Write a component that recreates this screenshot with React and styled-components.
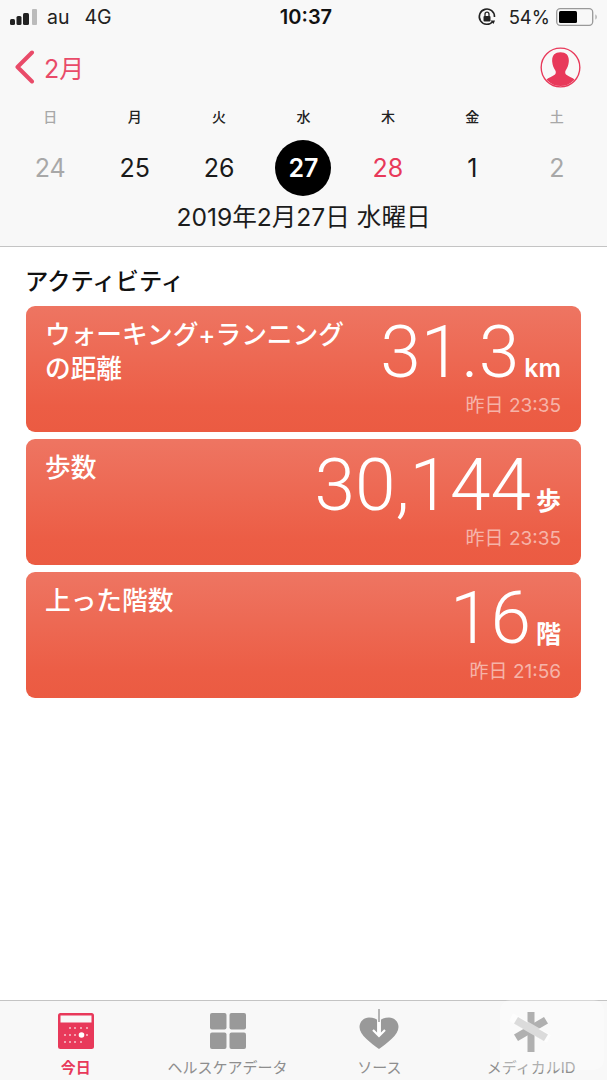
import React from 'react'
import styled, { createGlobalStyle } from 'styled-components'

const SANS = `Inter, "Noto Sans CJK JP", sans-serif`
const RED = '#e8395a'

const GlobalStyle = createGlobalStyle`
  html, body {
    margin: 0;
    padding: 0;
    background: #fff;
  }
  body {
    font-family: ${SANS};
  }
`

const Screen = styled.div`
  width: 607px;
  height: 1080px;
  display: flex;
  flex-direction: column;
  position: relative;
  overflow: hidden;
`

const Header = styled.header`
  height: 246px;
  background: #f8f8f8;
  border-bottom: 1px solid #c4c4c4;
  display: flex;
  flex-direction: column;
`

const StatusBar = styled.div`
  height: 34px;
  display: grid;
  grid-template-columns: 1fr auto 1fr;
  align-items: center;
  padding: 0 9px 0 10px;
  font-size: 19.5px;
  color: #222;
`

const StatusLeft = styled.div`
  display: flex;
  align-items: center;
  gap: 9px;
`

const Carrier = styled.span`
  margin-right: 6px;
`

const Clock = styled.div`
  font-weight: 600;
  font-size: 20px;
  margin-left: 4px;
  color: #111;
`

const StatusRight = styled.div`
  display: flex;
  align-items: center;
  justify-content: flex-end;
  gap: 6px;
  font-size: 18.5px;
`

const RotationWrap = styled.div`
  display: flex;
  margin-right: 6px;
`

const NavBar = styled.div`
  height: 66px;
  display: flex;
  align-items: center;
  justify-content: space-between;
  padding: 0 26px 0 14px;
`

const BackLink = styled.div`
  display: flex;
  align-items: center;
  gap: 9px;
  color: ${RED};
  font-size: 25px;
  opacity: 0.9;
`

const WeekGrid = styled.div`
  display: grid;
  grid-template-columns: repeat(7, 1fr);
  padding: 0 8px;
  justify-items: center;
`

const WeekDay = styled.div`
  font-size: 14px;
  font-weight: 500;
  height: 20px;
  line-height: 20px;
  margin-top: 7px;
  color: ${p => (p.$dim ? '#a8a8a8' : '#222')};
`

const DayCell = styled.div`
  width: 56px;
  height: 56px;
  margin-top: 13px;
  border-radius: 50%;
  display: flex;
  align-items: center;
  justify-content: center;
  font-size: 25px;
  font-weight: ${p => (p.$selected ? 600 : 400)};
  background: ${p => (p.$selected ? '#000' : 'transparent')};
  color: ${p => p.$color};
`

const DateTitle = styled.div`
  text-align: center;
  font-size: 24.6px;
  line-height: 32px;
  margin-top: 5px;
  color: #1c1c1c;
`

const Content = styled.main`
  flex: 1;
  padding: 20px 26px 0;
  display: flex;
  flex-direction: column;
`

const SectionTitle = styled.h2`
  margin: 0 0 9px;
  font-size: 23.3px;
  line-height: 30px;
  font-weight: 500;
  color: #111;
  text-indent: -1px;
`

const CardList = styled.div`
  display: flex;
  flex-direction: column;
  gap: 7px;
`

const Card = styled.div`
  height: 126px;
  box-sizing: border-box;
  padding: 12px 20px 14px;
  border-radius: 9px;
  background: linear-gradient(180deg, #ee7562 0%, #ec5d45 80%, #eb5b42 100%);
  color: #fff;
  display: flex;
  justify-content: space-between;
`

const CardTitle = styled.div`
  font-size: 25.7px;
  line-height: 34px;
  font-weight: 500;
  width: 305px;
  margin-left: -1px;
`

const CardRight = styled.div`
  display: flex;
  flex-direction: column;
  align-items: flex-end;
  justify-content: space-between;
`

const ValueRow = styled.div`
  display: flex;
  align-items: baseline;
  gap: 5px;
  white-space: nowrap;
`

const Value = styled.span`
  font-family: Roboto, sans-serif;
  font-size: 73px;
  line-height: 68px;
  font-weight: 300;
`

const Unit = styled.span`
  font-size: 25px;
  font-weight: 600;
`

const Updated = styled.div`
  font-size: 19px;
  line-height: 24px;
  color: rgba(255, 255, 255, 0.55);
`

const TabBar = styled.nav`
  height: 79px;
  background: #f8f8f8;
  border-top: 1px solid #c4c4c4;
  display: grid;
  grid-template-columns: repeat(4, 1fr);
`

const Tab = styled.div`
  display: flex;
  flex-direction: column;
  align-items: center;
  color: ${p => (p.$active ? RED : '#8e8e8e')};
`

const TabIcon = styled.div`
  height: 48px;
  display: flex;
  align-items: flex-end;
  justify-content: center;
`

const TabLabel = styled.div`
  font-size: 15px;
  line-height: 20px;
  margin-top: 9px;
  font-weight: ${p => (p.$active ? 700 : 400)};
  white-space: nowrap;
`

const DroppedSvg = styled.svg`
  margin-bottom: ${p => p.$drop}px;
`

const Watermark = styled.svg`
  position: absolute;
  right: 0;
  bottom: 10px;
  pointer-events: none;
`

const SignalIcon = () => (
  <svg width="28" height="18" viewBox="0 0 28 18">
    <rect x="0" y="11" width="5" height="6" rx="1.5" fill="#222" />
    <rect x="6.5" y="8" width="5" height="9" rx="1.5" fill="#222" />
    <rect x="13" y="5" width="6" height="12" rx="1.5" fill="#222" />
    <rect x="22" y="1" width="5" height="16" rx="1" fill="#bbb" />
  </svg>
)

const RotationLockIcon = () => (
  <svg width="20" height="20" viewBox="0 0 20 20">
    <path d="M15.8 14.5A7.6 7.6 0 1 1 17.5 10" fill="none" stroke="#222" strokeWidth="1.6" />
    <path d="M13.5 13.5l4.5 0-1.5 3.5z" fill="#222" />
    <rect x="6.5" y="9" width="7" height="5.5" rx="1" fill="#222" />
    <path d="M8 9V7.2a2 2 0 0 1 4 0V9" fill="none" stroke="#222" strokeWidth="1.3" />
  </svg>
)

const BatteryIcon = () => (
  <svg width="42" height="18" viewBox="0 0 42 18">
    <rect x="0.7" y="0.7" width="36" height="16.6" rx="3.5" fill="none" stroke="#999" strokeWidth="1.3" />
    <rect x="3" y="3" width="18" height="12" rx="1.5" fill="#000" />
    <path d="M39.5 6.5c1.5.5 1.5 4.5 0 5z" fill="#999" />
  </svg>
)

const ChevronLeft = () => (
  <svg width="21" height="34" viewBox="0 0 21 34">
    <path d="M18 2.5L3.5 17 18 31.5" fill="none" stroke={RED} strokeWidth="4" strokeLinecap="round" strokeLinejoin="round" />
  </svg>
)

const ProfileIcon = () => (
  <svg width="41" height="41" viewBox="0 0 42 42">
    <defs>
      <clipPath id="profile-clip"><circle cx="21" cy="21" r="19" /></clipPath>
    </defs>
    <circle cx="21" cy="21" r="19.8" fill="#f8f8f8" stroke={RED} strokeWidth="1.4" />
    <g clipPath="url(#profile-clip)" fill={RED}>
      <path d="M21 5.5c6 0 9 3.5 8.500 9.500-.3 3.500-1.500 6.500-3.200 9-.8 1.400-.6 3.500.7 4.500 2.500 2 6.500 3 8.500 5 1.500 1.500 2 4 2 8.500H4.500c0-4.500.5-7 2-8.500 2-2 6-3 8.500-5 1.300-1 1.500-3.100.7-4.500-1.700-2.500-2.900-5.500-3.200-9-.5-6 2.500-9.500 8.500-9.500z" />
    </g>
  </svg>
)

const CalendarTabIcon = () => {
  const dots = [
    [12, 15], [17, 15], [23, 15], [29, 15],
    [7, 22], [12, 22], [17, 22], [29, 22],
    [7, 29], [12, 29], [17, 29], [23, 29],
  ]
  return (
    <svg width="36" height="36" viewBox="0 0 36 36">
      <rect x="0" y="0" width="36" height="36" rx="2.5" fill={RED} />
      <rect x="2.5" y="2.5" width="31" height="7" fill="#f8f8f8" />
      {dots.map(([x, y]) => (
        <circle key={`${x}-${y}`} cx={x} cy={y} r="1" fill="#f6c6cf" />
      ))}
      <circle cx="23.5" cy="22" r="2.8" fill="#fff" />
    </svg>
  )
}

const GridTabIcon = () => (
  <svg width="36" height="36" viewBox="0 0 36 36">
    <rect x="0" y="0" width="16.5" height="16.5" rx="2" fill="#999" />
    <rect x="19.5" y="0" width="16.5" height="16.5" rx="2" fill="#999" />
    <rect x="0" y="19.5" width="16.5" height="16.5" rx="2" fill="#999" />
    <rect x="19.5" y="19.5" width="16.5" height="16.5" rx="2" fill="#999" />
  </svg>
)

const SourcesTabIcon = () => (
  <DroppedSvg $drop={-1} width="42" height="42" viewBox="0 0 40 42">
    <path d="M20 41C12 35 .5 27 .5 19 .5 13.5 5 9.5 10 9.5c4.500 0 8 1.500 10 4 2-2.500 5.500-4 10-4 5 0 9.500 4 9.500 9.500C39.5 27 28 35 20 41z" fill="#999" />
    <path d="M20 1v25" stroke="#f8f8f8" strokeWidth="4" />
    <path d="M20 1v13" stroke="#999" strokeWidth="1.4" />
    <path d="M20 14v14M14 22l6 6 6-6" fill="none" stroke="#fff" strokeWidth="2.2" />
  </DroppedSvg>
)

const MedicalTabIcon = () => (
  <DroppedSvg $drop={-3} width="40" height="40" viewBox="0 0 38 40">
    <rect x="15.5" y="0" width="7" height="40" fill="#8e8e8e" />
    <path d="M2 11.5l4-6.500 30 17.500-4 6.500z" fill="#8e8e8e" />
    <path d="M36 11.5l-4-6.500L2 22.500l4 6.500z" fill="#8e8e8e" />
  </DroppedSvg>
)

const days = [
  { week: '日', day: '24', color: '#a8a8a8', dim: true },
  { week: '月', day: '25', color: '#1a1a1a' },
  { week: '火', day: '26', color: '#1a1a1a' },
  { week: '水', day: '27', color: '#fff', selected: true },
  { week: '木', day: '28', color: RED },
  { week: '金', day: '1', color: '#1a1a1a' },
  { week: '土', day: '2', color: '#a8a8a8', dim: true },
]

const cards = [
  { title: 'ウォーキング+ランニングの距離', value: '31.3', unit: 'km', time: '昨日 23:35' },
  { title: '歩数', value: '30,144', unit: '歩', time: '昨日 23:35' },
  { title: '上った階数', value: '16', unit: '階', time: '昨日 21:56' },
]

const tabs = [
  { label: '今日', icon: <CalendarTabIcon />, active: true },
  { label: 'ヘルスケアデータ', icon: <GridTabIcon /> },
  { label: 'ソース', icon: <SourcesTabIcon /> },
  { label: 'メディカルID', icon: <MedicalTabIcon /> },
]

const App = () => (
  <Screen>
    <GlobalStyle />
    <Header>
      <StatusBar>
        <StatusLeft>
          <SignalIcon />
          <Carrier>au</Carrier>
          <span>4G</span>
        </StatusLeft>
        <Clock>10:37</Clock>
        <StatusRight>
          <RotationWrap><RotationLockIcon /></RotationWrap>
          <span>54%</span>
          <BatteryIcon />
        </StatusRight>
      </StatusBar>
      <NavBar>
        <BackLink>
          <ChevronLeft />
          2月
        </BackLink>
        <ProfileIcon />
      </NavBar>
      <WeekGrid>
        {days.map(d => <WeekDay key={d.week} $dim={d.dim}>{d.week}</WeekDay>)}
        {days.map(d => <DayCell key={d.day} $selected={d.selected} $color={d.color}>{d.day}</DayCell>)}
      </WeekGrid>
      <DateTitle>2019年2月27日 水曜日</DateTitle>
    </Header>
    <Content>
      <SectionTitle>アクティビティ</SectionTitle>
      <CardList>
        {cards.map(c => (
          <Card key={c.title}>
            <CardTitle>{c.title}</CardTitle>
            <CardRight>
              <ValueRow>
                <Value>{c.value}</Value>
                <Unit>{c.unit}</Unit>
              </ValueRow>
              <Updated>{c.time}</Updated>
            </CardRight>
          </Card>
        ))}
      </CardList>
    </Content>
    <TabBar>
      {tabs.map(t => (
        <Tab key={t.label} $active={t.active}>
          <TabIcon>{t.icon}</TabIcon>
          <TabLabel $active={t.active}>{t.label}</TabLabel>
        </Tab>
      ))}
    </TabBar>
    <Watermark width="110" height="80" viewBox="0 0 110 80">
      <rect x="3" y="10" width="104" height="70" rx="10" fill="#fff" opacity="0.3" />
      <path d="M16 23L54 45 50 53 12 31z" fill="#fff" opacity="0.55" />
    </Watermark>
  </Screen>
)

export default App
